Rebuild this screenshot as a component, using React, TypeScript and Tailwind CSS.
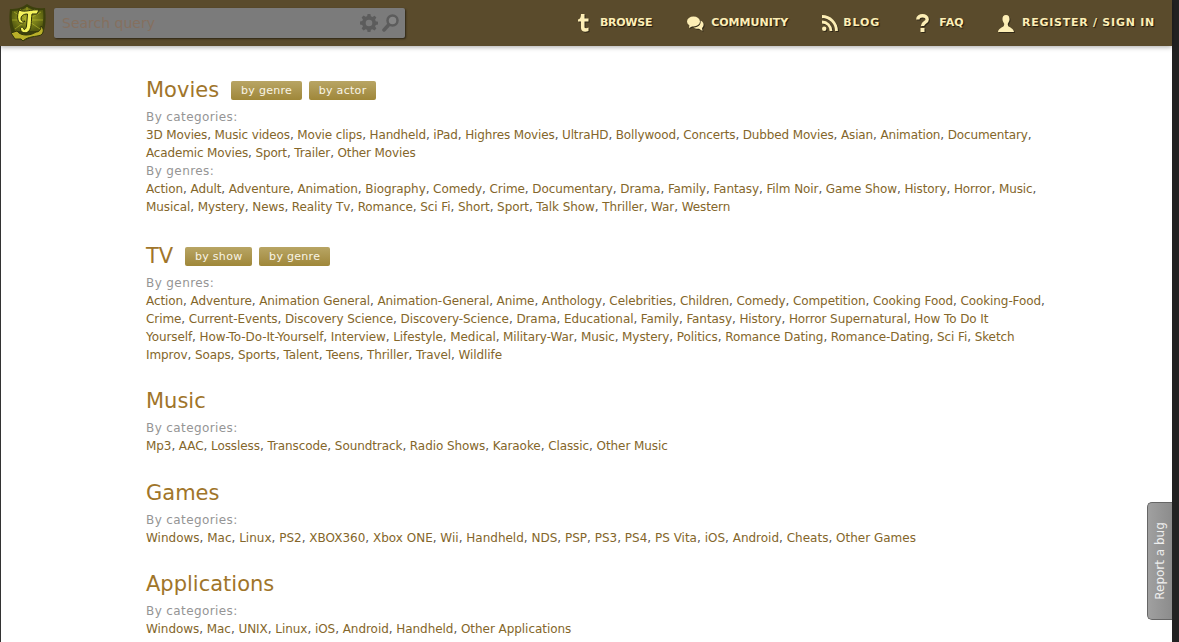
import { Fragment } from "react";

type Row = { label: string; items: string[]; track: string };
type Section = { title: string; buttons?: string[]; rows: Row[]; cls: string };

const sections: Section[] = [
  {
    title: "Movies",
    buttons: ["by genre", "by actor"],
    cls: "mt-[26px]",
    rows: [
      {
        label: "By categories:",
        track: "tracking-[-0.14px]",
        items: ["3D Movies", "Music videos", "Movie clips", "Handheld", "iPad", "Highres Movies", "UltraHD", "Bollywood", "Concerts", "Dubbed Movies", "Asian", "Animation", "Documentary", "Academic Movies", "Sport", "Trailer", "Other Movies"],
      },
      {
        label: "By genres:",
        track: "tracking-[-0.09px]",
        items: ["Action", "Adult", "Adventure", "Animation", "Biography", "Comedy", "Crime", "Documentary", "Drama", "Family", "Fantasy", "Film Noir", "Game Show", "History", "Horror", "Music", "Musical", "Mystery", "News", "Reality Tv", "Romance", "Sci Fi", "Short", "Sport", "Talk Show", "Thriller", "War", "Western"],
      },
    ],
  },
  {
    title: "TV",
    buttons: ["by show", "by genre"],
    cls: "mt-[22px]",
    rows: [
      {
        label: "By genres:",
        track: "tracking-[-0.09px]",
        // "|" marks the line break the reference has inside a link
        items: ["Action", "Adventure", "Animation General", "Animation-General", "Anime", "Anthology", "Celebrities", "Children", "Comedy", "Competition", "Cooking Food", "Cooking-Food", "Crime", "Current-Events", "Discovery Science", "Discovery-Science", "Drama", "Educational", "Family", "Fantasy", "History", "Horror Supernatural", "How To Do It|Yourself", "How-To-Do-It-Yourself", "Interview", "Lifestyle", "Medical", "Military-War", "Music", "Mystery", "Politics", "Romance Dating", "Romance-Dating", "Sci Fi", "Sketch|Improv", "Soaps", "Sports", "Talent", "Teens", "Thriller", "Travel", "Wildlife"],
      },
    ],
  },
  {
    title: "Music",
    cls: "mt-[19px]",
    rows: [{ label: "By categories:", track: "tracking-[-0.08px]", items: ["Mp3", "AAC", "Lossless", "Transcode", "Soundtrack", "Radio Shows", "Karaoke", "Classic", "Other Music"] }],
  },
  {
    title: "Games",
    cls: "mt-[20px]",
    rows: [{ label: "By categories:", track: "tracking-normal", items: ["Windows", "Mac", "Linux", "PS2", "XBOX360", "Xbox ONE", "Wii", "Handheld", "NDS", "PSP", "PS3", "PS4", "PS Vita", "iOS", "Android", "Cheats", "Other Games"] }],
  },
  {
    title: "Applications",
    cls: "mt-[19px]",
    rows: [{ label: "By categories:", track: "tracking-[-0.05px]", items: ["Windows", "Mac", "UNIX", "Linux", "iOS", "Android", "Handheld", "Other Applications"] }],
  },
];

function Logo() {
  return (
    <svg width="40" height="40" viewBox="0 0 40 40" className="shrink-0">
      <defs>
        <radialGradient id="shield" cx="50%" cy="45%" r="55%">
          <stop offset="0%" stopColor="#a8ac24" />
          <stop offset="100%" stopColor="#565c10" />
        </radialGradient>
      </defs>
      <path d="M2 6 C9 6 14 5 19 1 C25 5 30 6 37 5 C38 14 38 24 35 30 L15 38 L4 31 C1 23 1 14 2 6 Z" fill="#3c400c" />
      <path d="M4 8 C10 8 15 7 19 4 C24 7 29 8 35 7 C36 15 35 23 33 28 L7 28 C4 22 3 15 4 8 Z" fill="url(#shield)" />
      <path d="M19 17 L6 9 M19 17 L12 6 M19 17 L19 4 M19 17 L27 6 M19 17 L33 9 M19 17 L35 17 M19 17 L4 17 M19 17 L32 26 M19 17 L7 26" stroke="#c0c232" strokeWidth="1" opacity="0.55" />
      <path d="M28 29 C31 29 33 27 33 23 C36 25 36 30 33 32 C28 34 20 33 15 38 L13 36 L7 36 L3 30 L9 28 C11 31 15 32 18 32 C22 32 25 31 28 29 Z" fill="#b9b029" stroke="#33360a" strokeWidth="1" />
      <path d="M11 7 C17 10 23 6 31 7 L29 11 L24 11 C23 18 24 24 21 28 C18 31 13 30 12.500 26 C12.300 24 15 23.500 15.500 25.500 C16 27.500 18 26.500 18.500 23 L19.500 11 C15 11 13 13 13 16 C13 18 15 19 17 18 C16 21 11 21 10 17 C9 13 10 10 11 7 Z" fill="#f4f35c" stroke="#2c2f08" strokeWidth="1" />
    </svg>
  );
}

function Gear() {
  return (
    <svg width="18" height="18" viewBox="0 0 19 19" fill="#5c5c5c">
      <path d="M8 0h3l.5 2.400 1.700.7 2.100-1.300 2 2-1.400 2.100.7 1.700 2.400.5v3l-2.400.5-.7 1.700 1.400 2-2 2.100-2.100-1.400-1.700.7-.5 2.400H8l-.5-2.400-1.700-.7-2 1.400-2.100-2.100 1.400-2-.7-1.700L0 11V8l2.400-.5.7-1.700-1.400-2.100 2.100-2 2 1.300 1.700-.7L8 0Zm1.500 6a3.500 3.500 0 1 0 0 7 3.500 3.500 0 0 0 0-7Z" fillRule="evenodd" />
    </svg>
  );
}

function Magnifier() {
  return (
    <svg width="17" height="18" viewBox="0 0 17 18" fill="none">
      <circle cx="10.500" cy="6.500" r="5" stroke="#5c5c5c" strokeWidth="2.500" fill="#858585" />
      <path d="M6.500 11 L2 16" stroke="#5c5c5c" strokeWidth="3.500" strokeLinecap="round" />
    </svg>
  );
}

function NavIcon({ name }: { name: string }) {
  const c = "#fdeeb5";
  const shadow = "[filter:drop-shadow(1px_1px_0_rgba(0,0,0,0.45))]";
  if (name === "browse")
    return (
      <svg width="11" height="18" viewBox="0 0 11 18" fill={c} className={shadow}>
        <path d="M3 0h3.500v4.500H10.500v3H6.500v5.500c0 1.500 2 1.500 4 .5V17c-4 1.500-7.500.5-7.500-3V7.500H0V5.500c2 0 3-2.500 3-5.500Z" />
      </svg>
    );
  if (name === "community")
    return (
      <svg width="17" height="15" viewBox="0 0 17 15" fill={c} className={shadow}>
        <ellipse cx="6.500" cy="5.500" rx="6.500" ry="5" />
        <path d="M2.500 8.500 L2 12 L6 10 Z" />
        <path d="M13.500 4.500 C16 5.500 17 7.500 16.500 9.500 C16 11 15.500 11.500 15 12 L15.500 15 L12 12.800 C10 13 7.500 12.500 6.500 11.500 C10.500 11.500 14.500 9 13.500 4.500 Z" />
      </svg>
    );
  if (name === "blog")
    return (
      <svg width="16" height="16" viewBox="0 0 16 16" fill="none" stroke={c} strokeWidth="2.800" className={shadow}>
        <path d="M0 1.500 C8 1.500 14.500 8 14.500 16" />
        <path d="M0 7 C5 7 9 11 9 16" />
        <circle cx="2.200" cy="13.800" r="2.200" fill={c} stroke="none" />
      </svg>
    );
  if (name === "faq")
    return (
      <svg width="13" height="18" viewBox="0 0 13 18" fill="none" stroke={c} strokeWidth="3.400" className={shadow}>
        <path d="M1.800 5.500 C1.800 0.500 11.200 0.500 11.200 5.500 C11.200 8.500 6.500 8.500 6.500 12" />
        <rect x="4.500" y="14" width="4" height="4" fill={c} stroke="none" />
      </svg>
    );
  return (
    <svg width="16" height="17" viewBox="0 0 16 17" fill={c} className={shadow}>
      <path d="M8 0c2.600 0 3.700 2 3.500 4.400-.1 1.600-1.100 3-1.600 4-.4 1.300.2 2.700 1.600 3.700 1.600 1 3.900 1.700 4.500 4.900H0c.6-3.200 2.900-3.900 4.500-4.900 1.400-1 2-2.400 1.600-3.700-.5-1-1.500-2.400-1.600-4C4.300 2 5.400 0 8 0Z" />
    </svg>
  );
}

const nav = [
  { icon: "browse", label: "BROWSE", cls: "gap-[11px]", track: "tracking-[-0.25px]" },
  { icon: "community", label: "COMMUNITY", cls: "gap-[7px] ml-[1px]", track: "tracking-[0px]" },
  { icon: "blog", label: "BLOG", cls: "gap-[5px]", track: "tracking-[0.9px]" },
  { icon: "faq", label: "FAQ", cls: "gap-[10px] ml-[2px]", track: "tracking-[0.2px]" },
  { icon: "user", label: "REGISTER / SIGN IN", cls: "gap-[8px]", track: "tracking-[0.75px]" },
];

export default function App() {
  return (
    <div className="h-[642px] overflow-hidden bg-white font-['DejaVu_Sans',sans-serif] flex">
      <div className="flex-1 min-w-0 relative flex flex-col">
        <header className="h-[46px] shrink-0 relative z-10 bg-[#5a4b2c] shadow-[0_1px_5px_rgba(0,0,0,0.35)] flex items-center pl-[8px] pr-[17px]">
          <Logo />
          <div className="ml-[6px] w-[351px] h-[30px] bg-[#7b7b7b] rounded-[2px] shadow-[1px_1px_2px_rgba(0,0,0,0.5)] flex items-center pl-2 pr-[6px]">
            <span className="text-[14px] text-[#85705f] flex-1">Search query</span>
            <Gear />
            <span className="ml-[4px] flex"><Magnifier /></span>
          </div>
          <nav className="ml-auto flex items-center gap-[34px]">
            {nav.map((n) => (
              <a key={n.label} className={`flex items-center ${n.cls}`}>
                <NavIcon name={n.icon} />
                <span className={`text-[11px] font-bold ${n.track} text-[#fdeeb5] [text-shadow:1px_1px_1px_rgba(0,0,0,0.7)]`}>{n.label}</span>
              </a>
            ))}
          </nav>
        </header>

        <div className="flex-1 border-l border-[#333]">
          <main className="ml-[145px] w-[900px] text-[12px] leading-[18px]">
            {sections.map((s) => (
              <section key={s.title} className={s.cls}>
                <div className="flex items-center h-[36px]">
                  <h2 className="text-[21px] leading-[26px] font-normal text-[#a0752a]">{s.title}</h2>
                  {s.buttons?.map((b, i) => (
                    <a key={b} className={`${i === 0 ? "ml-[12px]" : "ml-[7px]"} ${b === "by genre" ? "w-[71px]" : "w-[67px]"} h-[19px] text-center rounded-[2px] bg-gradient-to-b from-[#b8a564] to-[#9f8739] text-[11px] leading-[20px] tracking-[0.3px] text-[#f8f4e6]`}>
                      {b}
                    </a>
                  ))}
                </div>
                {s.rows.map((r) => (
                  <div key={r.label}>
                    <div className="text-[#959595] tracking-[0.4px]">{r.label}</div>
                    <div className={`text-[#555] ${r.track}`}>
                      {r.items.map((it, i) => {
                        const [first, second] = it.split("|");
                        return (
                          <Fragment key={it + i}>
                            <a className="text-[#84662a]">
                              {first}
                              {second ? <br /> : null}
                              {second}
                            </a>
                            {i < r.items.length - 1 ? ", " : ""}
                          </Fragment>
                        );
                      })}
                    </div>
                  </div>
                ))}
              </section>
            ))}
          </main>
        </div>

        <div className="absolute top-[502px] right-0 w-[25px] h-[118px] bg-gradient-to-r from-[#a0a0a0] to-[#8c8c8c] border border-r-0 border-[#666] rounded-l-[5px] flex items-center justify-center">
          <span className="text-[12px] text-[#eee] whitespace-nowrap -rotate-90">Report a bug</span>
        </div>
      </div>
      <div className="w-[7px] bg-[#222] shrink-0" />
    </div>
  );
}
